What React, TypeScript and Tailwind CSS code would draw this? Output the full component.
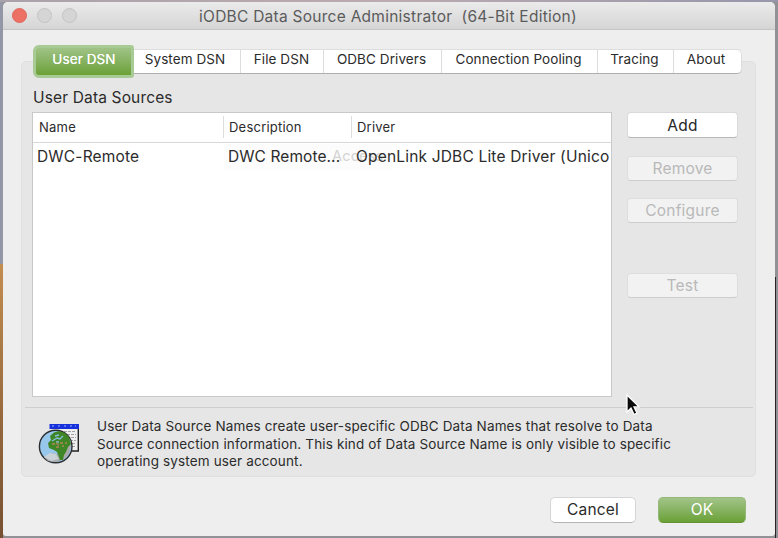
const tabs = [
  { label: 'System DSN', cls: 'w-[107px] pr-[4px]' },
  { label: 'File DSN', cls: 'w-[83px] pr-px' },
  { label: 'ODBC Drivers', cls: 'w-[118px] pr-[2px]' },
  { label: 'Connection Pooling', cls: 'w-[156px] pr-[2px]' },
  { label: 'Tracing', cls: 'w-[76px] pr-[2px]' },
  { label: 'About', cls: 'w-[68px] pr-[3px]' },
];

function SideButton({ label, disabled = false, className = '' }: { label: string; disabled?: boolean; className?: string }) {
  return (
    <button
      disabled={disabled}
      className={`flex w-[111px] items-center justify-center rounded-[4px] border text-[15.5px] leading-none tracking-[0.2px] ${
        disabled
          ? 'h-[25px] border-[#dedede] border-b-[#cdcdcd] bg-[#f2f2f2] pt-px text-[#b9b9b9]'
          : 'h-[26px] border-[#dadada] border-b-[#b8b8b8] bg-white pt-px text-[#262626]'
      } ${className}`}
    >
      {label}
    </button>
  );
}

function DataSourceIcon() {
  return (
    <svg width="42" height="42" viewBox="0 0 42 42" className="block">
      <path d="M12 3h28v26H12z" fill="#efefef" />
      <path d="M40.3 4v25H32" fill="none" stroke="#222" strokeWidth="1.4" />
      <path d="M11.5 2H41v5H11.5z" fill="#1630dc" />
      <path d="M14 4h2m4 0h2m4 0h2m4 0h2m3 0h1" stroke="#9cb6ff" />
      <path d="M14 9.5h24M25 12.5h13M29 15.5h9M32 18.5h6M34 21.5h4M34 24.5h4" stroke="#a4a4a4" strokeDasharray="3 1" />
      <circle cx="17.7" cy="24.5" r="16.3" fill="#97c7ea" stroke="#2a2d30" strokeWidth="1.4" />
      <path d="M6 35l8-4 5 1 4 5 3-8 4-7 2-6 1 8-2 8-6 6-8 2-7-1z" fill="#a9a9a9" />
      <path d="M6 35l6-4 6 1 3 5-8 2z" fill="#c9d2d9" />
      <path d="M16 10.5l5-1.5 6 2 4 4 2 7-3 3-2 5-2 3-1 5h-3l-3-8-3-2-5-2-1-5 3-3-1-4z" fill="#3f8726" />
      <path d="M14 19l5-3 3 1 3-3M17 14l4-1M18 20h3" stroke="#86bdd8" strokeWidth="1.4" fill="none" />
      <path d="M14 22h3M18 21l3 2M22 21h3M18 25h3M24 24h2M27 21h2" stroke="#94874a" strokeWidth="2" fill="none" />
    </svg>
  );
}

export default function App() {
  return (
    <div className="relative h-[538px] w-[778px] overflow-hidden bg-[#929296] pl-[3px] pt-[2px] font-['Inter','Liberation_Sans',sans-serif] text-[#2b2b2b]">
      <div className="absolute left-0 top-0 h-[264px] w-[3px] bg-[#9296a5]" />
      <div className="absolute left-0 top-0 h-[2px] w-full bg-linear-to-r from-[#aaa2a9] via-[#bcabb0] to-[#9696aa]" />
      <div className="absolute left-0 top-[264px] h-[274px] w-[3px] bg-linear-to-b from-[#c38d4f] to-[#765031]" />
      <div className="absolute left-[775px] top-[277px] h-[261px] w-px bg-[#292323]" />

      <div className="relative flex h-[534px] w-[772px] flex-col overflow-hidden rounded-t-[5px] rounded-b-[3px] bg-[#eeeeee]">
        <header className="flex h-[28px] shrink-0 items-center border-b border-[#c5c5c5] bg-linear-to-b from-[#ebebeb] to-[#d5d5d5] pl-[9px]">
          <div className="flex w-[187px] gap-[10px]">
            <span className="size-[15px] rounded-full border border-[#df665c] bg-[#ec7064]" />
            <span className="size-[15px] rounded-full border border-[#c3c3c3] bg-[#d5d5d5]" />
            <span className="size-[15px] rounded-full border border-[#c3c3c3] bg-[#d5d5d5]" />
          </div>
          <h1 className="whitespace-pre pt-[2px] text-[15.5px] leading-none tracking-[0.26px] text-[#5b5b5b]">iODBC Data Source Administrator  (64-Bit Edition)</h1>
        </header>

        <main className="ml-[18px] mt-[31px] h-[416px] w-[735px] shrink-0 rounded-[5px] border border-[#e0e0e0] bg-[#e6e6e6]">
          <nav className="relative -mt-[17px] ml-[11px] flex h-[33px] w-[709px] items-center">
            <button className="flex h-[33px] w-[101px] shrink-0 items-center justify-center rounded-[6px] rounded-r-[3px] border-[3px] border-[#a8ca95] bg-linear-to-b from-[#a0c386] to-[#6ba135] pb-[3px] pl-px text-[13.5px] leading-none tracking-[0.1px] text-white [text-shadow:0_0_0.5px_white]">User DSN</button>
            <div className="relative flex h-[25px] rounded-r-[5px] border-b border-t border-b-[#aeaeae] border-t-[#dddddd] bg-white">
              {tabs.map((t) => (
                <button key={t.label} className={`${t.cls} flex items-center justify-center whitespace-nowrap border-r border-[#dddddd] pb-[3px] text-[13.5px] leading-none tracking-[0.08px] last:rounded-r-[5px]`}>
                  {t.label}
                </button>
              ))}
            </div>
          </nav>

          <h2 className="ml-[11px] mt-[10px] h-[20px] text-[15.5px] leading-[20px] tracking-[0.15px]">User Data Sources</h2>

          <div className="mt-[4px] flex pl-[10px]">
            <div className="h-[285px] w-[580px] overflow-hidden border border-[#c9c9c9] bg-white">
              <div className="flex h-[30px] items-center border-b border-[#d8d8d8] pb-px text-[13px] leading-none tracking-[0.22px]">
                <span className="flex h-[22px] w-[191px] items-center border-r border-[#dddddd] pl-[6px]">Name</span>
                <span className="flex h-[22px] w-[128px] items-center border-r border-[#dddddd] pl-[5px]">Description</span>
                <span className="pl-[5px]">Driver</span>
              </div>
              <div className="relative flex h-[27px] items-center whitespace-nowrap text-[15.5px] leading-none tracking-[0.18px]">
                <div className="absolute left-[191px] top-px h-[26px] w-[168px] bg-[#fcfcfc]" />
                <span className="absolute left-[299px] top-[6px] text-[14.5px] text-[#d3d3d3]">Access</span>
                <span className="relative w-[191px] pl-[4px]">DWC-Remote</span>
                <span className="relative w-[128px] pl-[4px] tracking-[0.08px]">DWC Remote...</span>
                <span className="relative pl-[4px]">OpenLink JDBC Lite Driver (Unico</span>
              </div>
            </div>
            <div className="ml-[15px] flex flex-col">
              <SideButton label="Add" />
              <SideButton label="Remove" disabled className="mt-[18px]" />
              <SideButton label="Configure" disabled className="mt-[17px]" />
              <SideButton label="Test" disabled className="mt-[50px]" />
            </div>
          </div>

          <div className="ml-[3px] mt-[10px] h-px w-[728px] bg-[#cecece]" />
          <div className="flex pl-[16px] pt-[14px]">
            <DataSourceIcon />
            <p className="-mt-[4px] ml-[17px] whitespace-nowrap text-[13.5px] leading-[17.5px] tracking-[0.14px]">
              User Data Source Names create user-specific ODBC Data Names that resolve to Data<br />
              Source connection information. This kind of Data Source Name is only visible to specific<br />
              operating system user account.
            </p>
          </div>
        </main>

        <footer className="mt-[20px] flex pl-[547px] text-[15.5px] leading-none tracking-[0.2px]">
          <button className="flex h-[26px] w-[86px] items-center justify-center rounded-[5px] border border-[#d5d5d5] border-b-[#b5b5b5] bg-white">Cancel</button>
          <button className="ml-[22px] flex h-[26px] w-[88px] items-center justify-center rounded-[5px] border border-[#94b878] border-b-[#659334] bg-linear-to-b from-[#a2c488] to-[#6ba135] text-white">OK</button>
        </footer>
      </div>

      <svg width="17" height="24" viewBox="0 0 17 24" className="absolute left-[625px] top-[393px]">
        <path d="M2 2v17l4-4 3 6.5 3-1.4-3-6.2h5z" fill="#0b0b0b" stroke="#fff" strokeWidth="1.3" />
      </svg>
    </div>
  );
}
